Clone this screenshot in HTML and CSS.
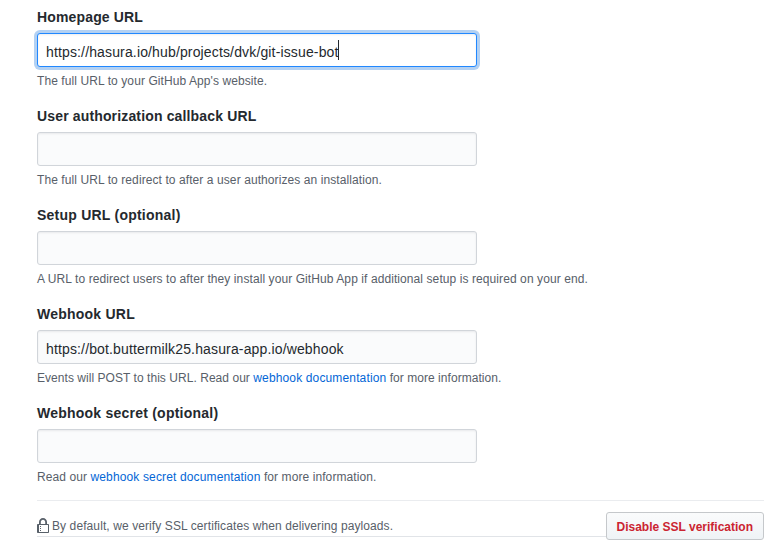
FILE: index.html
```
<!DOCTYPE html>
<html lang="en">
<head>
<meta charset="utf-8">
<title>GitHub App settings</title>
<link rel="stylesheet" href="styles.css">
</head>
<body>
<main class="form">
  <section class="group">
    <h2 class="label label-tight">Homepage URL</h2>
    <div class="field focused"><span class="value">https://hasura.io/hub/projects/dvk/git-issue-bot</span><span class="caret"></span></div>
    <p class="note">The full URL to your GitHub App's website.</p>
  </section>
  <section class="group">
    <h2 class="label label-tight">User authorization callback URL</h2>
    <div class="field"></div>
    <p class="note">The full URL to redirect to after a user authorizes an installation.</p>
  </section>
  <section class="group">
    <h2 class="label">Setup URL (optional)</h2>
    <div class="field"></div>
    <p class="note">A URL to redirect users to after they install your GitHub App if additional setup is required on your end.</p>
  </section>
  <section class="group">
    <h2 class="label">Webhook URL</h2>
    <div class="field"><span class="value">https://bot.buttermilk25.hasura-app.io/webhook</span></div>
    <p class="note note-linked">Events will POST to this URL. Read our <a href="#">webhook documentation</a> for more information.</p>
  </section>
  <section class="group">
    <h2 class="label">Webhook secret (optional)</h2>
    <div class="field"></div>
    <p class="note">Read our <a href="#">webhook secret documentation</a> for more information.</p>
  </section>
  <footer class="ssl">
    <svg class="lock" width="12" height="16" viewBox="0 0 12 16"><path fill-rule="evenodd" d="M4 13H3v-1h1v1zm8-6v7c0 .55-.45 1-1 1H1c-.55 0-1-.45-1-1V7c0-.55.45-1 1-1h1V4c0-2.2 1.8-4 4-4s4 1.8 4 4v2h1c.55 0 1 .45 1 1zM3.8 6h4.41V4c0-1.22-.98-2.2-2.2-2.2-1.22 0-2.2.98-2.2 2.2v2H3.8zM11 7H2v7h9V7zM4 8H3v1h1V8zm0 2H3v1h1v-1z"/></svg>
    <span class="ssl-text">By default, we verify SSL certificates when delivering payloads.</span>
    <button class="btn">Disable SSL verification</button>
  </footer>
</main>
</body>
</html>
```
FILE: styles.css
```
* { box-sizing: border-box; }
body {
  margin: 0;
  height: 544px;
  overflow: hidden;
  background: #fff;
  color: #24292e;
  font: 14px/21px "Liberation Sans", Arial, sans-serif;
}
.form { width: 727px; margin-left: 37px; padding-top: 7px; }
.group { height: 99px; }
.label { margin: 0 0 5px; font-size: 14px; line-height: 21px; font-weight: 700; letter-spacing: .23px; }
.label-tight { letter-spacing: .15px; }
.field {
  display: flex;
  align-items: center;
  width: 440px;
  height: 34px;
  padding: 0 8px;
  border: 1px solid #d1d5da;
  border-radius: 3px;
  background: #fafbfc;
  box-shadow: inset 0 1px 2px rgba(27, 31, 35, .075);
}
.focused {
  background: #fff;
  border-color: #2188ff;
  box-shadow: inset 0 1px 2px rgba(27, 31, 35, .075), 0 0 0 3px rgba(3, 102, 214, .3);
}
.value { padding-top: 4px; letter-spacing: .145px; }
.caret { width: 1px; height: 20px; margin-left: -1px; background: #24292e; }
.note {
  margin: 5px 0 0;
  font-size: 12px;
  line-height: 18px;
  letter-spacing: .085px;
  color: #586069;
  white-space: nowrap;
}
.note-linked { letter-spacing: .045px; }
a { color: #0366d6; text-decoration: none; letter-spacing: .14px; }
.ssl {
  display: flex;
  align-items: flex-start;
  height: 37px;
  margin-top: -2px;
  padding-top: 11px;
  border-top: 1px solid #eaecef;
  border-bottom: 1px solid #e1e4e8;
  font-size: 12px;
  color: #586069;
}
.lock { fill: #586069; margin: 6px 3px 0 0; }
.ssl-text { margin-top: 4px; letter-spacing: .095px; }
.btn {
  height: 28px;
  margin-left: auto;
  padding: 1px 10px 0;
  border: 1px solid #c5c8cb;
  border-radius: 3px;
  background: linear-gradient(#fafbfc, #eff3f6);
  color: #cb2431;
  font: bold 12px/20px "Liberation Sans", Arial, sans-serif;
}
```
